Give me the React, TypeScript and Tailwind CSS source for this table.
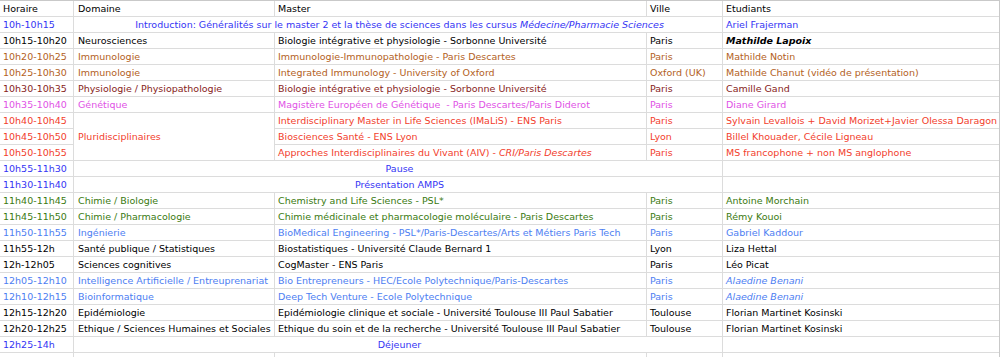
import React from "react";

type Row = {
  time: string;
  color: string;
  domaine?: string;
  master?: React.ReactNode;
  ville?: string;
  etud?: React.ReactNode;
  banner?: React.ReactNode;
  skipDomaine?: boolean;
  domaineSpan?: boolean;
};

const BLUE = "text-[#3434f4]";
const BROWN = "text-[#b3611d]";
const MAROON = "text-[#87231a]";
const PINK = "text-[#df52e6]";
const RED = "text-[#f2402c]";
const GREEN = "text-[#3a7a10]";
const SKY = "text-[#4d7ef2]";
const BLACK = "text-black";

const rows: Row[] = [
  {
    time: "10h-10h15",
    color: BLUE,
    banner: (
      <>
        Introduction: Généralités sur le master 2 et la thèse de sciences dans les cursus{" "}
        <span className="italic">Médecine/Pharmacie Sciences</span>
      </>
    ),
    etud: "Ariel Frajerman",
  },
  {
    time: "10h15-10h20",
    color: BLACK,
    domaine: "Neurosciences",
    master: "Biologie intégrative et physiologie - Sorbonne Université",
    ville: "Paris",
    etud: <span className="font-bold italic">Mathilde Lapoix</span>,
  },
  {
    time: "10h20-10h25",
    color: BROWN,
    domaine: "Immunologie",
    master: "Immunologie-Immunopathologie - Paris Descartes",
    ville: "Paris",
    etud: "Mathilde Notin",
  },
  {
    time: "10h25-10h30",
    color: BROWN,
    domaine: "Immunologie",
    master: "Integrated Immunology - University of Oxford",
    ville: "Oxford (UK)",
    etud: "Mathilde Chanut (vidéo de présentation)",
  },
  {
    time: "10h30-10h35",
    color: MAROON,
    domaine: "Physiologie / Physiopathologie",
    master: "Biologie intégrative et physiologie - Sorbonne Université",
    ville: "Paris",
    etud: "Camille Gand",
  },
  {
    time: "10h35-10h40",
    color: PINK,
    domaine: "Génétique",
    master: "Magistère Européen de Génétique  - Paris Descartes/Paris Diderot",
    ville: "Paris",
    etud: "Diane Girard",
  },
  {
    time: "10h40-10h45",
    color: RED,
    domaine: "Pluridisciplinaires",
    domaineSpan: true,
    master: "Interdisciplinary Master in Life Sciences (IMaLiS) - ENS Paris",
    ville: "Paris",
    etud: "Sylvain Levallois + David Morizet+Javier Olessa Daragon",
  },
  {
    time: "10h45-10h50",
    color: RED,
    skipDomaine: true,
    master: "Biosciences Santé - ENS Lyon",
    ville: "Lyon",
    etud: "Billel Khouader, Cécile Ligneau",
  },
  {
    time: "10h50-10h55",
    color: RED,
    skipDomaine: true,
    master: (
      <>
        Approches Interdisciplinaires du Vivant (AIV) - <span className="italic">CRI/Paris Descartes</span>
      </>
    ),
    ville: "Paris",
    etud: "MS francophone + non MS anglophone",
  },
  { time: "10h55-11h30", color: BLUE, banner: "Pause", etud: "" },
  { time: "11h30-11h40", color: BLUE, banner: "Présentation AMPS", etud: "" },
  {
    time: "11h40-11h45",
    color: GREEN,
    domaine: "Chimie / Biologie",
    master: "Chemistry and Life Sciences - PSL*",
    ville: "Paris",
    etud: "Antoine Morchain",
  },
  {
    time: "11h45-11h50",
    color: GREEN,
    domaine: "Chimie / Pharmacologie",
    master: "Chimie médicinale et pharmacologie moléculaire - Paris Descartes",
    ville: "Paris",
    etud: "Rémy Kouoi",
  },
  {
    time: "11h50-11h55",
    color: SKY,
    domaine: "Ingénierie",
    master: "BioMedical Engineering - PSL*/Paris-Descartes/Arts et Métiers Paris Tech",
    ville: "Paris",
    etud: "Gabriel Kaddour",
  },
  {
    time: "11h55-12h",
    color: BLACK,
    domaine: "Santé publique / Statistiques",
    master: "Biostatistiques - Université Claude Bernard 1",
    ville: "Lyon",
    etud: "Liza Hettal",
  },
  {
    time: "12h-12h05",
    color: BLACK,
    domaine: "Sciences cognitives",
    master: "CogMaster - ENS Paris",
    ville: "Paris",
    etud: "Léo Picat",
  },
  {
    time: "12h05-12h10",
    color: SKY,
    domaine: "Intelligence Artificielle / Entreuprenariat",
    master: "Bio Entrepreneurs - HEC/Ecole Polytechnique/Paris-Descartes",
    ville: "Paris",
    etud: <span className="italic">Alaedine Benani</span>,
  },
  {
    time: "12h10-12h15",
    color: SKY,
    domaine: "Bioinformatique",
    master: "Deep Tech Venture - Ecole Polytechnique",
    ville: "Paris",
    etud: <span className="italic">Alaedine Benani</span>,
  },
  {
    time: "12h15-12h20",
    color: BLACK,
    domaine: "Epidémiologie",
    master: "Epidémiologie clinique et sociale - Université Toulouse III Paul Sabatier",
    ville: "Toulouse",
    etud: "Florian Martinet Kosinski",
  },
  {
    time: "12h20-12h25",
    color: BLACK,
    domaine: "Ethique / Sciences Humaines et Sociales",
    master: "Ethique du soin et de la recherche - Université Toulouse III Paul Sabatier",
    ville: "Toulouse",
    etud: "Florian Martinet Kosinski",
  },
  { time: "12h25-14h", color: BLUE, banner: "Déjeuner", etud: "" },
  { time: "", color: BLACK, domaine: "", master: "", ville: "", etud: "" },
  { time: "", color: BLACK, domaine: "", master: "", ville: "", etud: "" },
];

const cell = "bg-white pl-[3px] flex items-center whitespace-pre overflow-hidden leading-none";

function Cell({ className, children }: { className: string; children?: React.ReactNode }) {
  return (
    <div className={`${cell} ${className}`}>
      <span>{children}</span>
    </div>
  );
}

export default function App() {
  return (
    <div
      className="h-[357px] w-[1002px] overflow-hidden bg-white text-[9.5px]"
      style={{ fontFamily: '"DejaVu Sans", sans-serif' }}
    >
      <div className="w-[1000px] border-t border-r border-[#c9c9c9] bg-[#dcdcdc] grid grid-cols-[73px_200px_371px_75px_276px] auto-rows-[15px] gap-px">
        <Cell className="text-black">Horaire</Cell>
        <Cell className="text-black pl-[4px]">Domaine</Cell>
        <Cell className="text-black">Master</Cell>
        <Cell className="text-black">Ville</Cell>
        <Cell className="text-black">Etudiants</Cell>

        {rows.map((r, i) => (
          <React.Fragment key={i}>
            <Cell className={r.color}>{r.time}</Cell>
            {r.banner !== undefined ? (
              <Cell className={`${r.color} col-span-3 justify-center pl-0`}>{r.banner}</Cell>
            ) : (
              <>
                {!r.skipDomaine && (
                  <Cell className={`${r.color} pl-[4px] ${r.domaineSpan ? "row-span-3" : ""}`}>
                    {r.domaine}
                  </Cell>
                )}
                <Cell className={r.color}>{r.master}</Cell>
                <Cell className={r.color}>{r.ville}</Cell>
              </>
            )}
            <Cell className={r.color}>{r.etud}</Cell>
          </React.Fragment>
        ))}
      </div>
    </div>
  );
}
